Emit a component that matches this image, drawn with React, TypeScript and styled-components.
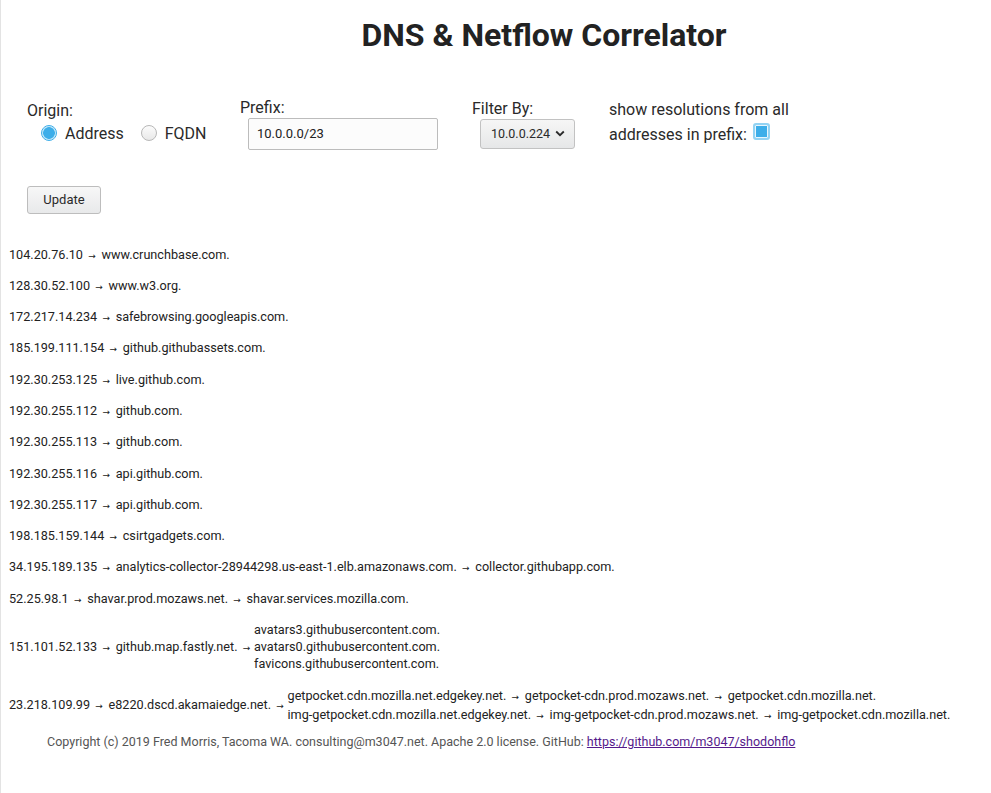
import React from "react";
import styled, { createGlobalStyle } from "styled-components";

const Global = createGlobalStyle`
  html, body { margin: 0; padding: 0; background: #fff; }
  body { font-family: Roboto, "Liberation Sans", sans-serif; color: #222; }
`;

const Page = styled.div`
  min-height: 793px;
  box-sizing: border-box;
  border-left: 1px solid #e3e3e3;
`;

const Title = styled.h1`
  margin: 0;
  padding: 17px 0 0 96px;
  font-size: 32px;
  line-height: 36px;
  font-weight: 700;
  text-align: center;
  color: #222;
`;

const Form = styled.div`
  display: grid;
  grid-template-columns: 213px 232px 137px auto;
  padding-left: 26px;
  margin-top: 44px;
  font-size: 16px;
  color: #2a2a2a;
`;

const Group = styled.div<{ $top: number }>`
  display: flex;
  flex-direction: column;
  align-items: flex-start;
  padding-top: ${(p) => p.$top}px;
`;

const Label = styled.div`
  line-height: 19px;
`;

const RadioRow = styled.div`
  display: flex;
  align-items: center;
  margin-top: 4px;
  padding-left: 14px;
  height: 20px;
`;

const RadioLabel = styled.label`
  display: flex;
  align-items: center;
  gap: 8px;
  margin-right: 17px;
`;

const Radio = styled.span<{ $on?: boolean }>`
  width: 16px;
  height: 16px;
  box-sizing: border-box;
  border-radius: 50%;
  border: 1px solid ${(p) => (p.$on ? "#3daee9" : "#b8b8b8")};
  background: ${(p) =>
    p.$on
      ? "radial-gradient(circle, #3daee9 0 5.5px, #a8dcf5 6px, #dff2fc 7px)"
      : "linear-gradient(#fcfcfc, #e8e8e8)"};
  margin-top: -2px;
`;

const TextInput = styled.div`
  margin: 1px 0 0 8px;
  width: 190px;
  height: 32px;
  box-sizing: border-box;
  border: 1px solid #bcbcbc;
  border-radius: 2px;
  background: #fcfcfc;
  font-size: 13px;
  padding-left: 8px;
  display: flex;
  align-items: center;
  color: #222;
`;

const Select = styled.div`
  margin: 1px 0 0 8px;
  width: 95px;
  height: 30px;
  box-sizing: border-box;
  border: 1px solid #c2c2c2;
  border-radius: 3px;
  background: linear-gradient(#f6f6f6, #e6e7e8);
  font-size: 12.5px;
  padding-left: 10px;
  display: flex;
  align-items: center;
  gap: 5px;
  color: #2a2a2a;
`;

const Wrapped = styled.div`
  line-height: 25px;
`;

const Check = styled.span`
  display: inline-block;
  vertical-align: middle;
  width: 17px;
  height: 17px;
  box-sizing: border-box;
  border: 2px solid #93d3f3;
  border-radius: 3px;
  background: #3daee9;
  box-shadow: inset 0 0 0 1px #e8f6fd;
  margin: -9px 0 0 6px;
`;

const Button = styled.div`
  margin: 36px 0 0 26px;
  width: 74px;
  height: 28px;
  box-sizing: border-box;
  border: 1px solid #bdbdbd;
  border-radius: 3px;
  background: linear-gradient(#f7f7f7, #e8e9ea);
  font-size: 13px;
  color: #2a2a2a;
  display: flex;
  align-items: center;
  justify-content: center;
`;

const Results = styled.div`
  margin-top: 25px;
  padding-left: 8px;
  font-size: 12.65px;
  color: #222;
`;

const Row = styled.div<{ $pt?: number; $pb?: number }>`
  display: flex;
  align-items: center;
  line-height: 15.3px;
  padding: ${(p) => p.$pt ?? 8}px 0 ${(p) => p.$pb ?? 8}px;
  white-space: pre;
`;

const Stack = styled.div<{ $lh: number }>`
  display: flex;
  flex-direction: column;
  line-height: ${(p) => p.$lh}px;
  margin-left: -2px;
`;

const ArrowGlyph = styled.span`
  display: inline-block;
  width: 12px;
  margin: 0 3.5px 0 3px;
  text-align: center;
  font-family: "DejaVu Sans", sans-serif;
  font-size: 9px;
  line-height: 1;
  color: #222;
`;

const Footer = styled.div`
  margin-top: 5px;
  padding-left: 46px;
  font-size: 12.5px;
  line-height: 14px;
  color: #555;
`;

const Link = styled.a`
  color: #551a8b;
  text-decoration: underline;
`;

const simple: string[][] = [
  ["104.20.76.10", "www.crunchbase.com."],
  ["128.30.52.100", "www.w3.org."],
  ["172.217.14.234", "safebrowsing.googleapis.com."],
  ["185.199.111.154", "github.githubassets.com."],
  ["192.30.253.125", "live.github.com."],
  ["192.30.255.112", "github.com."],
  ["192.30.255.113", "github.com."],
  ["192.30.255.116", "api.github.com."],
  ["192.30.255.117", "api.github.com."],
  ["198.185.159.144", "csirtgadgets.com."],
  ["34.195.189.135", "analytics-collector-28944298.us-east-1.elb.amazonaws.com.", "collector.githubapp.com."],
  ["52.25.98.1", "shavar.prod.mozaws.net.", "shavar.services.mozilla.com."],
];

const Chain = ({ parts, trailing }: { parts: string[]; trailing?: boolean }) => (
  <span>
    {parts.map((p, i) => (
      <React.Fragment key={i}>
        {i > 0 && <ArrowGlyph>{"\u2192"}</ArrowGlyph>}
        {p}
      </React.Fragment>
    ))}
    {trailing && <ArrowGlyph>{"\u2192"}</ArrowGlyph>}
  </span>
);

const Chevron = () => (
  <svg width="10" height="7" viewBox="0 0 10 7">
    <path d="M1.2 1.5 L5 5.2 L8.8 1.5" fill="none" stroke="#2a2a2a" strokeWidth="1.8" />
  </svg>
);

export default function App() {
  return (
    <>
      <Global />
      <Page>
        <Title>DNS &amp; Netflow Correlator</Title>
        <Form>
          <Group $top={3.5}>
            <Label>Origin:</Label>
            <RadioRow>
              <RadioLabel>
                <Radio $on />
                Address
              </RadioLabel>
              <RadioLabel>
                <Radio />
                FQDN
              </RadioLabel>
            </RadioRow>
          </Group>
          <Group $top={0.5}>
            <Label>Prefix:</Label>
            <TextInput>10.0.0.0/23</TextInput>
          </Group>
          <Group $top={1.5}>
            <Label>Filter By:</Label>
            <Select>
              10.0.0.224
              <Chevron />
            </Select>
          </Group>
          <Group $top={0}>
            <Wrapped>
              show resolutions from all
              <br />
              addresses in prefix:
              <Check />
            </Wrapped>
          </Group>
        </Form>
        <Button>Update</Button>
        <Results>
          {simple.map((parts) => (
            <Row key={parts[0]}>
              <Chain parts={parts} />
            </Row>
          ))}
          <Row $pt={7} $pb={6}>
            <Chain parts={["151.101.52.133", "github.map.fastly.net."]} trailing />
            <Stack $lh={17}>
              <span>avatars3.githubusercontent.com.</span>
              <span>avatars0.githubusercontent.com.</span>
              <span>favicons.githubusercontent.com.</span>
            </Stack>
          </Row>
          <Row $pt={8} $pb={6}>
            <Chain parts={["23.218.109.99", "e8220.dscd.akamaiedge.net."]} trailing />
            <Stack $lh={19}>
              <Chain
                parts={["getpocket.cdn.mozilla.net.edgekey.net.", "getpocket-cdn.prod.mozaws.net.", "getpocket.cdn.mozilla.net."]}
              />
              <Chain
                parts={[
                  "img-getpocket.cdn.mozilla.net.edgekey.net.",
                  "img-getpocket-cdn.prod.mozaws.net.",
                  "img-getpocket.cdn.mozilla.net.",
                ]}
              />
            </Stack>
          </Row>
        </Results>
        <Footer>
          Copyright (c) 2019 Fred Morris, Tacoma WA. consulting@m3047.net. Apache 2.0 license. GitHub:{" "}
          <Link href="#">https://github.com/m3047/shodohflo</Link>
        </Footer>
      </Page>
    </>
  );
}
